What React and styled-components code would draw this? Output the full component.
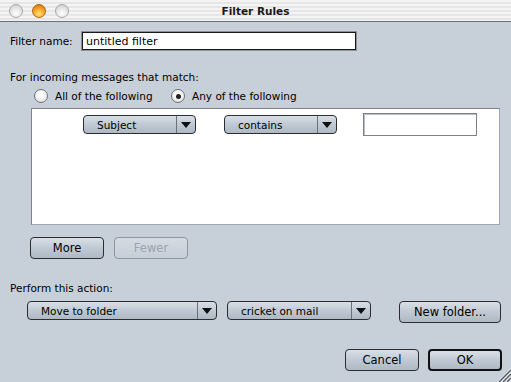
import styled, { createGlobalStyle, css } from "styled-components";

const GlobalStyle = createGlobalStyle`
  html, body {
    margin: 0;
    padding: 0;
    background: #c7cfd8;
  }
  body {
    font-family: "DejaVu Sans", "Liberation Sans", sans-serif;
    font-size: 10.5px;
    color: #000;
  }
`;

const Window = styled.div`
  position: relative;
  width: 100vw;
  height: 100vh;
  display: flex;
  flex-direction: column;
  background: #c7cfd8;
  overflow: hidden;
`;

const TitleBar = styled.div`
  height: 21px;
  flex-shrink: 0;
  border-bottom: 1px solid #6d6f72;
  display: flex;
  align-items: center;
  padding-left: 9px;
  background: repeating-linear-gradient(
    to bottom,
    #f4f4f4 0px,
    #f4f4f4 2px,
    #e6e6e6 2px,
    #e6e6e6 4px
  );
`;

const Lights = styled.div`
  display: flex;
  gap: 9px;
  width: 60px;
`;

const Light = styled.span`
  width: 12px;
  height: 12px;
  border-radius: 50%;
  border: 1px solid #a8a8a8;
  background: radial-gradient(circle at 50% 70%, #ffffff 0%, #e4e4e4 55%, #c4c4c4 100%);
  ${(p) =>
    p.$active &&
    css`
      border-color: #b5661a;
      background: radial-gradient(circle at 50% 75%, #ffe27a 0%, #f7a52a 50%, #c4690f 100%);
    `}
`;

const Title = styled.div`
  flex: 1;
  text-align: center;
  font-weight: bold;
  font-size: 10.5px;
  margin-right: 69px;
  color: #1a1a1a;
`;

const Body = styled.div`
  flex: 1;
  display: flex;
  flex-direction: column;
  padding: 10px 10px 0 10px;
`;

const Row = styled.div`
  display: flex;
  align-items: ${(p) => p.$align || "center"};
  gap: ${(p) => p.$gap || 0}px;
  margin-top: ${(p) => p.$top || 0}px;
  margin-left: ${(p) => p.$left || 0}px;
  justify-content: ${(p) => p.$justify || "flex-start"};
`;

const FieldLabel = styled.span`
  width: 72px;
  line-height: 18px;
`;

const NameInput = styled.div`
  width: 269px;
  height: 16px;
  background: #fff;
  border: 1px solid #1a1a1a;
  box-shadow: 0 0 0 1px #8d9096;
  display: flex;
  align-items: center;
  padding-left: 3px;
  font-size: 11px;
`;

const SectionLabel = styled.div`
  line-height: 14px;
  margin-top: ${(p) => p.$top}px;
`;

const Radio = styled.span`
  width: 12px;
  height: 12px;
  border-radius: 50%;
  border: 1px solid #6f7378;
  background: radial-gradient(circle at 50% 35%, #ffffff 0%, #f2f2f2 50%, #cfd3d8 100%);
  display: flex;
  align-items: center;
  justify-content: center;
  margin-right: 7px;
  &::after {
    content: "";
    width: 5px;
    height: 5px;
    border-radius: 50%;
    background: ${(p) => (p.$checked ? "#222" : "transparent")};
  }
`;

const RadioOption = styled.label`
  display: flex;
  align-items: center;
  line-height: 14px;
`;

const ListBox = styled.div`
  margin: 5px 0 0 21px;
  width: 416px;
  height: 111px;
  background: #fff;
  border: 1px solid #7e848a;
  border-right-color: #a0a6ad;
  border-bottom-color: #a0a6ad;
  padding: 4px 0 0 51px;
  box-sizing: content-box;
  display: flex;
  align-items: flex-start;
`;

const buttonFace = css`
  background: linear-gradient(to bottom, #d9dfe6 0%, #c2cbd5 45%, #aeb9c5 100%);
  border: 1px solid #2b2e31;
  border-radius: 4px;
  box-sizing: border-box;
`;

const PopupBox = styled.div`
  ${buttonFace}
  width: ${(p) => p.$w}px;
  height: ${(p) => p.$h || 19}px;
  display: flex;
  align-items: stretch;
  flex-shrink: 0;
`;

const PopupText = styled.span`
  flex: 1;
  display: flex;
  align-items: center;
  padding-left: ${(p) => p.$pad || 12}px;
  font-size: 10.5px;
`;

const PopupArrow = styled.span`
  width: 18px;
  border-left: 1px solid #6a7279;
  display: flex;
  align-items: center;
  justify-content: center;
  &::after {
    content: "";
    border-left: 5px solid transparent;
    border-right: 5px solid transparent;
    border-top: 6px solid #111;
  }
`;

const TextField = styled.div`
  width: 114px;
  height: 23px;
  box-sizing: border-box;
  background: #fff;
  border: 1px solid #7c8187;
  box-shadow: inset 1px 1px 0 #b9bec4;
  flex-shrink: 0;
`;

const Button = styled.button`
  ${buttonFace}
  width: ${(p) => p.$w || 74}px;
  height: 22px;
  padding: 0;
  font-family: "DejaVu Sans", "Liberation Sans", sans-serif;
  font-size: 11.5px;
  color: #000;
  flex-shrink: 0;
  ${(p) =>
    p.disabled &&
    css`
      color: #9aa3ad;
      border-color: #8d969f;
      background: linear-gradient(to bottom, #d4dbe2 0%, #c6ced8 100%);
    `}
  ${(p) =>
    p.$default &&
    css`
      border: 2px solid #111;
    `}
`;

const Grip = styled.svg`
  position: absolute;
  right: 0;
  bottom: 0;
  z-index: 5;
`;

function Popup({ w, pad, children }) {
  return (
    <PopupBox $w={w}>
      <PopupText $pad={pad}>{children}</PopupText>
      <PopupArrow />
    </PopupBox>
  );
}

export default function App() {
  return (
    <Window>
      <GlobalStyle />
      <TitleBar>
        <Lights>
          <Light />
          <Light $active />
          <Light />
        </Lights>
        <Title>Filter Rules</Title>
      </TitleBar>
      <Body>
        <Row>
          <FieldLabel>Filter name:</FieldLabel>
          <NameInput>untitled filter</NameInput>
        </Row>

        <SectionLabel $top={20}>For incoming messages that match:</SectionLabel>
        <Row $top={5} $left={24}>
          <RadioOption style={{ width: 137 }}>
            <Radio />
            All of the following
          </RadioOption>
          <RadioOption>
            <Radio $checked />
            Any of the following
          </RadioOption>
        </Row>

        <ListBox>
          <Row>
            <Popup w={113} pad={13}>Subject</Popup>
            <Row $left={28}>
              <Popup w={113} pad={13}>contains</Popup>
            </Row>
            <Row $left={26}>
              <TextField />
            </Row>
          </Row>
        </ListBox>

        <Row $top={12} $left={20} $gap={10}>
          <Button>More</Button>
          <Button disabled>Fewer</Button>
        </Row>

        <SectionLabel $top={22}>Perform this action:</SectionLabel>
        <Row $top={6} $left={17} $align="flex-start">
          <Popup w={190} pad={13}>Move to folder</Popup>
          <Row $left={10}>
            <Popup w={144} pad={13}>cricket on mail</Popup>
          </Row>
          <Row $left={28}>
            <Button $w={102}>New folder...</Button>
          </Row>
        </Row>

        <Row $top={26} $gap={9} $justify="flex-end" style={{ marginRight: -1 }}>
          <Button>Cancel</Button>
          <Button $default>OK</Button>
        </Row>
      </Body>
      <Grip width="14" height="14" viewBox="0 0 14 14">
        <polygon points="0,14 14,0 14,14" fill="#e4e8ec" />
        <line x1="2" y1="14" x2="14" y2="2" stroke="#5a5f66" strokeWidth="1.4" />
        <line x1="6" y1="14" x2="14" y2="6" stroke="#5a5f66" strokeWidth="1.4" />
        <line x1="10" y1="14" x2="14" y2="10" stroke="#5a5f66" strokeWidth="1.4" />
      </Grip>
    </Window>
  );
}
